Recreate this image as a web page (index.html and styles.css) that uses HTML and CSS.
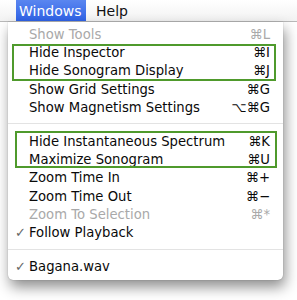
FILE: index.html
```html
<!DOCTYPE html>
<html>
<head>
<meta charset="utf-8">
<link rel="stylesheet" href="styles.css">
</head>
<body>
<div class="menubar">
  <span class="title active">Windows</span>
  <span class="title">Help</span>
</div>
<div class="menu">
  <div class="item disabled"><span class="check"></span><span class="label">Show Tools</span><span class="key">⌘L</span></div>
  <div class="group g1">
    <div class="item"><span class="check"></span><span class="label">Hide Inspector</span><span class="key">⌘I</span></div>
    <div class="item"><span class="check"></span><span class="label">Hide Sonogram Display</span><span class="key">⌘J</span></div>
  </div>
  <div class="item"><span class="check"></span><span class="label">Show Grid Settings</span><span class="key">⌘G</span></div>
  <div class="item"><span class="check"></span><span class="label">Show Magnetism Settings</span><span class="key">⌥⌘G</span></div>
  <div class="sep"></div>
  <div class="group g2">
    <div class="item"><span class="check"></span><span class="label">Hide Instantaneous Spectrum</span><span class="key">⌘K</span></div>
    <div class="item"><span class="check"></span><span class="label">Maximize Sonogram</span><span class="key">⌘U</span></div>
  </div>
  <div class="item"><span class="check"></span><span class="label">Zoom Time In</span><span class="key">⌘+</span></div>
  <div class="item"><span class="check"></span><span class="label">Zoom Time Out</span><span class="key">⌘−</span></div>
  <div class="item disabled"><span class="check"></span><span class="label">Zoom To Selection</span><span class="key">⌘*</span></div>
  <div class="item"><span class="check">✓</span><span class="label">Follow Playback</span><span class="key"></span></div>
  <div class="sep"></div>
  <div class="item"><span class="check">✓</span><span class="label">Bagana.wav</span><span class="key"></span></div>
</div>
</body>
</html>
```
FILE: styles.css
```css
html, body {
  margin: 0;
  padding: 0;
  background: #ffffff;
}
body {
  font-family: "DejaVu Sans", sans-serif;
  width: 297px;
  height: 300px;
  overflow: hidden;
}
.menubar {
  height: 21px;
  display: flex;
  align-items: stretch;
  background: linear-gradient(#ffffff, #f2f2f2);
  border-bottom: 1px solid #b9b9b9;
  padding-left: 16px;
  font-size: 14px;
}
.title {
  display: flex;
  align-items: center;
  padding: 0 6px 0 3px;
  color: #111;
}
.title.active {
  background: linear-gradient(#5a86f0, #2f62e6);
  color: #fff;
  padding: 0 6px 0 3px;
  width: 61px;
}
.title + .title {
  padding-left: 10px;
}
.menu {
  position: relative;
  margin-left: 8px;
  width: 275px;
  background: #fff;
  border-radius: 0 0 5px 5px;
  box-shadow: 2px 7px 14px rgba(0, 0, 0, 0.45), 0 0 1px rgba(0, 0, 0, 0.4);
  padding: 3px 0 4px;
  font-size: 13.2px;
  color: #0a0a0a;
}
.item {
  height: 18.3px;
  display: flex;
  align-items: center;
  padding: 0 13px 0 7px;
}
.check {
  width: 14px;
  color: #666;
  font-size: 13px;
}
.label {
  flex: 1;
}
.key {
  white-space: nowrap;
}
.disabled {
  color: #a9a9a9;
}
.sep {
  height: 1px;
  background: #e3e3e3;
  margin: 7px 0 7.5px;
}
.group {
  position: relative;
}
.group::after {
  content: "";
  position: absolute;
  border: 2px solid #4f9a2c;
  pointer-events: none;
}
.g1::after {
  left: 4px;
  right: 7px;
  top: 1px;
  bottom: -1px;
}
.g2::after {
  left: 7px;
  right: 6px;
  top: -1px;
  bottom: 1px;
}
```
